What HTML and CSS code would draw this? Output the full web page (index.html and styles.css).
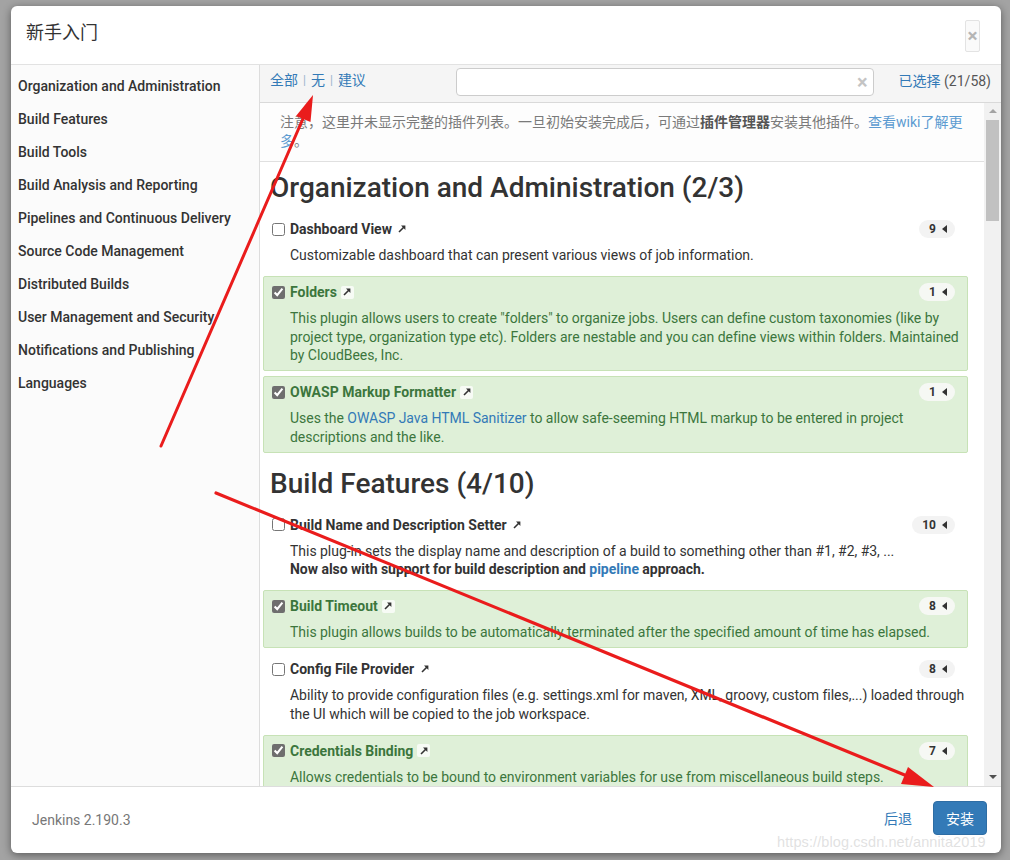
FILE: index.html
```html
<!DOCTYPE html>
<html lang="zh-CN">
<head>
<meta charset="utf-8">
<title>新手入门</title>
<link rel="stylesheet" href="styles.css">
</head>
<body>
<div class="modal">
  <header class="modal-header">
    <h4 class="modal-title">新手入门</h4>
    <button class="close" type="button">×</button>
  </header>

  <div class="modal-body">
    <nav class="categories">
      <a>Organization and Administration</a>
      <a>Build Features</a>
      <a>Build Tools</a>
      <a>Build Analysis and Reporting</a>
      <a>Pipelines and Continuous Delivery</a>
      <a>Source Code Management</a>
      <a>Distributed Builds</a>
      <a>User Management and Security</a>
      <a>Notifications and Publishing</a>
      <a>Languages</a>
    </nav>

    <section class="plugins">
      <div class="toolbar">
        <div class="select-links"><a>全部</a><span class="sep">|</span><a>无</a><span class="sep">|</span><a>建议</a></div>
        <div class="search"><input type="text" aria-label="search"><span class="clear">×</span></div>
        <div class="selected"><a>已选择</a> (21/58)</div>
      </div>

      <div class="scroll-area">
        <div class="plugin-list">
          <p class="note">注意，这里并未显示完整的插件列表。一旦初始安装完成后，可通过<strong>插件管理器</strong>安装其他插件。<a>查看wiki了解更多</a>。</p>

          <h2 class="category">Organization and Administration (2/3)</h2>

          <div class="plugin">
            <div class="plugin-head">
              <label><input type="checkbox"><span class="name">Dashboard View</span><span class="ext"><svg viewBox="0 0 12 12" width="12" height="12"><path d="M3 9 L8.5 3.5" stroke="#333" stroke-width="1.6" fill="none"/><path d="M5 2.6 H9.4 V7 Z" fill="#333"/></svg></span></label>
              <span class="deps">9<i class="tri"></i></span>
            </div>
            <div class="desc">Customizable dashboard that can present various views of job information.</div>
          </div>

          <div class="plugin checked">
            <div class="plugin-head">
              <label><input type="checkbox" checked><span class="name">Folders</span><span class="ext"><svg viewBox="0 0 12 12" width="12" height="12"><path d="M3 9 L8.5 3.5" stroke="#333" stroke-width="1.6" fill="none"/><path d="M5 2.6 H9.4 V7 Z" fill="#333"/></svg></span></label>
              <span class="deps">1<i class="tri"></i></span>
            </div>
            <div class="desc">This plugin allows users to create "folders" to organize jobs. Users can define custom taxonomies (like by project type, organization type etc). Folders are nestable and you can define views within folders. Maintained by CloudBees, Inc.</div>
          </div>

          <div class="plugin checked">
            <div class="plugin-head">
              <label><input type="checkbox" checked><span class="name">OWASP Markup Formatter</span><span class="ext"><svg viewBox="0 0 12 12" width="12" height="12"><path d="M3 9 L8.5 3.5" stroke="#333" stroke-width="1.6" fill="none"/><path d="M5 2.6 H9.4 V7 Z" fill="#333"/></svg></span></label>
              <span class="deps">1<i class="tri"></i></span>
            </div>
            <div class="desc">Uses the <a>OWASP Java HTML Sanitizer</a> to allow safe-seeming HTML markup to be entered in project descriptions and the like.</div>
          </div>

          <h2 class="category">Build Features (4/10)</h2>

          <div class="plugin">
            <div class="plugin-head">
              <label><input type="checkbox"><span class="name">Build Name and Description Setter</span><span class="ext"><svg viewBox="0 0 12 12" width="12" height="12"><path d="M3 9 L8.5 3.5" stroke="#333" stroke-width="1.6" fill="none"/><path d="M5 2.6 H9.4 V7 Z" fill="#333"/></svg></span></label>
              <span class="deps">10<i class="tri"></i></span>
            </div>
            <div class="desc">This plug-in sets the display name and description of a build to something other than #1, #2, #3, ...<br><strong>Now also with support for build description and <a>pipeline</a> approach.</strong></div>
          </div>

          <div class="plugin checked">
            <div class="plugin-head">
              <label><input type="checkbox" checked><span class="name">Build Timeout</span><span class="ext"><svg viewBox="0 0 12 12" width="12" height="12"><path d="M3 9 L8.5 3.5" stroke="#333" stroke-width="1.6" fill="none"/><path d="M5 2.6 H9.4 V7 Z" fill="#333"/></svg></span></label>
              <span class="deps">8<i class="tri"></i></span>
            </div>
            <div class="desc">This plugin allows builds to be automatically terminated after the specified amount of time has elapsed.</div>
          </div>

          <div class="plugin">
            <div class="plugin-head">
              <label><input type="checkbox"><span class="name">Config File Provider</span><span class="ext"><svg viewBox="0 0 12 12" width="12" height="12"><path d="M3 9 L8.5 3.5" stroke="#333" stroke-width="1.6" fill="none"/><path d="M5 2.6 H9.4 V7 Z" fill="#333"/></svg></span></label>
              <span class="deps">8<i class="tri"></i></span>
            </div>
            <div class="desc">Ability to provide configuration files (e.g. settings.xml for maven, XML, groovy, custom files,...) loaded through the UI which will be copied to the job workspace.</div>
          </div>

          <div class="plugin checked">
            <div class="plugin-head">
              <label><input type="checkbox" checked><span class="name">Credentials Binding</span><span class="ext"><svg viewBox="0 0 12 12" width="12" height="12"><path d="M3 9 L8.5 3.5" stroke="#333" stroke-width="1.6" fill="none"/><path d="M5 2.6 H9.4 V7 Z" fill="#333"/></svg></span></label>
              <span class="deps">7<i class="tri"></i></span>
            </div>
            <div class="desc">Allows credentials to be bound to environment variables for use from miscellaneous build steps.</div>
          </div>
        </div>

        <div class="scrollbar">
          <span class="sb-up"></span>
          <span class="sb-thumb"></span>
          <span class="sb-fill"></span>
          <span class="sb-down"></span>
        </div>
      </div>
    </section>
  </div>

  <footer class="modal-footer">
    <span class="version">Jenkins 2.190.3</span>
    <div class="actions"><a class="btn-link">后退</a><button class="btn-primary" type="button">安装</button></div>
  </footer>
</div>

<svg class="annotations" width="1010" height="860" viewBox="0 0 1010 860">
  <line x1="161" y1="446" x2="305" y2="114" stroke="#ea1c1c" stroke-width="3" stroke-linecap="round"/>
  <polygon points="313,95 310.5,122 296,116" fill="#ea1c1c"/>
  <line x1="216" y1="493" x2="912" y2="778" stroke="#ea1c1c" stroke-width="3.2" stroke-linecap="round"/>
  <polygon points="934,787 901,784 908,767" fill="#ea1c1c"/>
</svg>
<div class="watermark">https://blog.csdn.net/annita2019</div>
</body>
</html>
```

FILE: styles.css
```css
* { box-sizing: border-box; }

html, body { margin: 0; padding: 0; }

body {
  width: 1010px;
  height: 860px;
  overflow: hidden;
  position: relative;
  padding: 6px 9px 0 11px;
  background: #a3a3a3;
  font-family: Roboto, "Noto Sans CJK SC", sans-serif;
  font-size: 14px;
  color: #333;
}

a { color: #337ab7; cursor: pointer; }

/* ---------- modal frame ---------- */
.modal {
  width: 990px;
  height: 847px;
  background: #fff;
  border-radius: 6px;
  box-shadow: 0 2px 8px rgba(0, 0, 0, 0.45);
  display: flex;
  flex-direction: column;
  overflow: hidden;
}

.modal-header {
  flex: none;
  height: 59px;
  border-bottom: 1px solid #e2e2e2;
  display: flex;
  justify-content: space-between;
  align-items: flex-start;
  padding: 0 21px 0 15px;
}

.modal-title {
  margin: 17px 0 0;
  font-size: 18px;
  line-height: 20px;
  font-weight: 400;
  color: #333;
}

.close {
  margin-top: 14px;
  width: 15px;
  height: 32px;
  padding: 0;
  border: 1px solid #e3e3e3;
  border-radius: 2px;
  background: #fafafa;
  color: #b5b5b5;
  font-family: Roboto, sans-serif;
  font-size: 19px;
  font-weight: 700;
  line-height: 28px;
}

/* ---------- body ---------- */
.modal-body {
  flex: 1;
  min-height: 0;
  display: flex;
}

.categories {
  flex: none;
  width: 249px;
  border-right: 1px solid #ddd;
  background: #fbfbfb;
  padding: 5px 0 0 7px;
  display: flex;
  flex-direction: column;
}

.categories a {
  display: block;
  line-height: 33px;
  color: #333;
  font-weight: 500;
  text-decoration: none;
  white-space: nowrap;
}

.plugins {
  flex: 1;
  min-width: 0;
  display: flex;
  flex-direction: column;
}

.toolbar {
  flex: none;
  height: 38px;
  background: #f5f5f5;
  border-bottom: 1px solid #d9d9d9;
  display: flex;
  align-items: center;
  padding: 0 10px 0 10px;
}

.select-links { display: flex; align-items: center; line-height: 20px; margin-top: -7px; }
.select-links a { text-decoration: none; }
.select-links .sep { color: #9ab4cc; font-size: 12px; margin: 0 5px; }

.search {
  margin-left: auto;
  margin-right: 25px;
  width: 418px;
  height: 28px;
  position: relative;
  margin-top: -3px;
}

.search input {
  width: 100%;
  height: 100%;
  border: 1px solid #ccc;
  border-radius: 4px;
  background: #fff;
  outline: none;
}

.search .clear {
  position: absolute;
  right: 6px;
  top: 3px;
  color: #c4c4c4;
  font-size: 20px;
  font-weight: 700;
  line-height: 22px;
}

.selected { color: #555; white-space: nowrap; margin-top: -7px; }
.selected a { text-decoration: none; }

.scroll-area {
  flex: 1;
  min-height: 0;
  display: flex;
}

.plugin-list {
  flex: 1;
  min-width: 0;
  overflow: hidden;
  display: flex;
  flex-direction: column;
}

.note {
  flex: none;
  margin: 0;
  padding: 10px 18px 10px 20px;
  line-height: 19px;
  color: #7a7a7a;
  background: #fdfdfd;
  border-bottom: 1px solid #e0e0e0;
}

.note strong { color: #555; }
.note a { color: #5c9bd1; text-decoration: none; }

.category {
  flex: none;
  margin: 9px 0 8px;
  padding-left: 10px;
  font-size: 28px;
  line-height: 34px;
  font-weight: 500;
  color: #333;
}

.plugin {
  flex: none;
  margin: 0 16px 5px 3px;
  padding: 5px 0 5.5px 8px;
  border: 1px solid transparent;
  border-radius: 2px;
}

.plugin.checked {
  background: #dff0d8;
  border-color: #c7e2b6;
  color: #3c763d;
}

.plugin-head {
  display: flex;
  align-items: center;
  justify-content: space-between;
  height: 20px;
}

.plugin-head label { display: flex; align-items: center; }

.plugin-head input {
  width: 13px;
  height: 13px;
  margin: 0 5px 0 0;
  accent-color: #6e6e6e;
}

.name { font-weight: 700; }

.ext {
  display: inline-flex;
  align-items: center;
  justify-content: center;
  width: 13px;
  height: 13px;
  margin-left: 4px;
  background: rgba(255, 255, 255, 0.75);
  border-radius: 2px;
}

.deps {
  display: inline-flex;
  align-items: center;
  height: 18px;
  margin-right: 12px;
  padding: 0 8px 0 10px;
  border-radius: 9px;
  background: #f3f3f3;
  color: #333;
  font-size: 12px;
  font-weight: 700;
}

.checked .deps { background: #f6f8f4; }

.tri {
  width: 0;
  height: 0;
  margin-left: 6px;
  border-top: 4px solid transparent;
  border-bottom: 4px solid transparent;
  border-right: 5px solid #333;
}

.desc {
  margin-top: 7px;
  padding-left: 18px;
  line-height: 18.5px;
  letter-spacing: -0.03px;
}

.desc a { text-decoration: none; color: #337ab7; }

/* fake scrollbar column */
.scrollbar {
  flex: none;
  width: 17px;
  background: #f1f1f1;
  display: flex;
  flex-direction: column;
  align-items: center;
}

.sb-up, .sb-down {
  flex: none;
  width: 0;
  height: 0;
  border-left: 4px solid transparent;
  border-right: 4px solid transparent;
}

.sb-up { margin: 6px 0 5px; border-bottom: 4px solid #a3a3a3; }
.sb-down { margin: 5px 0 7px; border-top: 4px solid #505050; }

.sb-thumb {
  flex: none;
  width: 13px;
  height: 101px;
  margin-top: 2px;
  background: #c1c1c1;
}

.sb-fill { flex: 1; }

/* ---------- footer ---------- */
.modal-footer {
  flex: none;
  height: 67px;
  border-top: 1px solid #ddd;
  display: flex;
  align-items: center;
  justify-content: space-between;
  padding: 0 14px 0 21px;
}

.version { color: #777; }

.actions { display: flex; align-items: center; margin-top: -4px; }

.btn-link { text-decoration: none; margin-right: 21px; }

.btn-primary {
  height: 34px;
  padding: 0 12px;
  border: 1px solid #2e6da4;
  border-radius: 4px;
  background: #337ab7;
  color: #fff;
  font-family: Roboto, "Noto Sans CJK SC", sans-serif;
  font-size: 14px;
}

/* ---------- screenshot annotations ---------- */
.annotations {
  position: absolute;
  left: 0;
  top: 0;
  pointer-events: none;
}

.watermark {
  position: absolute;
  left: 777px;
  top: 834px;
  font-family: "Liberation Sans", Arial, sans-serif;
  font-size: 14.5px;
  color: rgba(220, 220, 220, 0.85);
  letter-spacing: 0.1px;
  pointer-events: none;
}
```
